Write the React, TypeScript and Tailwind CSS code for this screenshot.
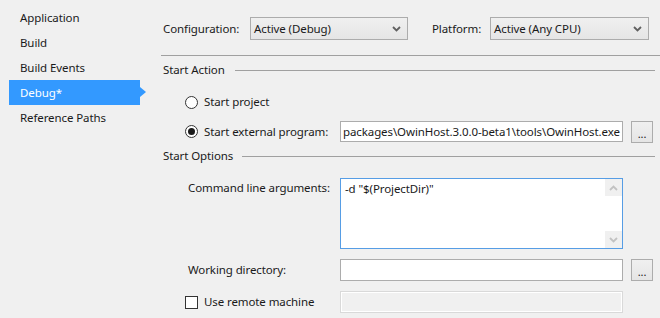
import React from "react";

const navItems = ["Application", "Build", "Build Events", "Debug*", "Reference Paths"];

const Chevron = ({ up = false, className = "" }: { up?: boolean; className?: string }) => (
  <svg width="9" height="6" viewBox="0 0 9 6" className={className}>
    <path
      d={up ? "M1 5 L4.5 1.5 L8 5" : "M1 1 L4.5 4.5 L8 1"}
      fill="none"
      stroke="currentColor"
      strokeWidth="1.8"
    />
  </svg>
);

const Select = ({ value, width }: { value: string; width: string }) => (
  <div
    className={`${width} h-[23px] border border-[#acacac] bg-gradient-to-b from-[#f0f0f0] to-[#e5e5e5] flex items-center justify-between pl-[3px] pr-[6px]`}
  >
    <span>{value}</span>
    <Chevron className="text-[#606060]" />
  </div>
);

const Browse = () => (
  <div className="ml-[8px] w-[22px] h-[22px] border border-[#acacac] bg-gradient-to-b from-[#f0f0f0] to-[#e5e5e5] flex items-end justify-center pb-[3px] text-[11px] leading-none">
    ...
  </div>
);

const SectionHeader = ({ title, labelWidth }: { title: string; labelWidth: string }) => (
  <div className="h-[20px] flex items-center pl-[2px] pr-[5px]">
    <div className={labelWidth}>{title}</div>
    <div className="flex-1 h-px bg-[#a0a0a0]"></div>
  </div>
);

const Radio = ({ checked = false }: { checked?: boolean }) => (
  <div className="w-[13px] h-[13px] rounded-full border border-[#333] bg-white flex items-center justify-center">
    {checked && <div className="w-[7px] h-[7px] rounded-full bg-[#1a1a1a]"></div>}
  </div>
);

export default function App() {
  return (
    <div
      className="w-[660px] h-[318px] bg-[#f0f0f0] flex overflow-hidden text-[11.5px] tracking-[-0.1px] text-[#1a1a1a]"
      style={{ fontFamily: '"Noto Sans", "Open Sans", sans-serif' }}
    >
      {/* Nav */}
      <div className="w-[161px] pt-[5px]">
        {navItems.map((item) => {
          const active = item === "Debug*";
          return (
            <div key={item} className="h-[25px] flex items-center">
              {active ? (
                <div className="relative ml-[9px] w-[131px] h-[25px] bg-[#3399ff] text-white flex items-center pl-[11px]">
                  {item}
                  <div className="absolute right-[-6px] top-[7px] w-0 h-0 border-y-[5px] border-y-transparent border-l-[6px] border-l-[#3399ff]"></div>
                </div>
              ) : (
                <div className="pl-[20px]">{item}</div>
              )}
            </div>
          );
        })}
      </div>

      {/* Main */}
      <div className="flex-1 flex flex-col">
        <div className="mt-[17px] h-[23px] flex items-center">
          <div className="w-[89px] pl-[2px]">Configuration:</div>
          <Select value="Active (Debug)" width="w-[158px]" />
          <div className="ml-[24px] w-[58px]">Platform:</div>
          <Select value="Active (Any CPU)" width="w-[159px]" />
        </div>

        <div className="mt-[15px] h-px bg-[#a0a0a0]"></div>

        <div className="mt-[4px]">
          <SectionHeader title="Start Action" labelWidth="w-[72px]" />
        </div>

        <div className="mt-[12px] h-[20px] flex items-center pl-[24px] gap-[6px]">
          <Radio />
          <span>Start project</span>
        </div>

        <div className="mt-[9px] h-[21px] flex items-center pl-[24px]">
          <div className="w-[155px] flex items-center gap-[6px]">
            <Radio checked />
            <span>Start external program:</span>
          </div>
          <div className="w-[283px] h-[21px] border border-[#acacac] bg-white flex items-center pl-[2px] overflow-hidden whitespace-nowrap">
            packages\OwinHost.3.0.0-beta1\tools\OwinHost.exe
          </div>
          <Browse />
        </div>

        <div className="mt-[4px]">
          <SectionHeader title="Start Options" labelWidth="w-[79px]" />
        </div>

        <div className="mt-[12px] flex pl-[27px]">
          <div className="w-[152px] pt-[1px]">Command line arguments:</div>
          <div className="w-[283px] h-[71px] border border-[#569de5] bg-white flex">
            <div className="flex-1 pl-[4px] pt-[1px]">-d "$(ProjectDir)"</div>
            <div className="w-[17px] flex flex-col justify-between">
              <div className="h-[17px] bg-[#f0f0f0] flex items-center justify-center">
                <Chevron up className="text-[#c2c2c2]" />
              </div>
              <div className="h-[17px] bg-[#f0f0f0] flex items-center justify-center">
                <Chevron className="text-[#c2c2c2]" />
              </div>
            </div>
          </div>
        </div>

        <div className="mt-[10px] h-[22px] flex items-center pl-[27px]">
          <div className="w-[152px]">Working directory:</div>
          <div className="w-[283px] h-[22px] border border-[#acacac] bg-white"></div>
          <Browse />
        </div>

        <div className="mt-[10px] h-[22px] flex items-center pl-[24px]">
          <div className="w-[155px] flex items-center gap-[6px]">
            <div className="w-[13px] h-[13px] border border-[#333] bg-white"></div>
            <span>Use remote machine</span>
          </div>
          <div className="w-[283px] h-[22px] border border-[#d9d9d9] bg-[#f0f0f0] shadow-[inset_0_0_0_1px_#ffffff]"></div>
        </div>
      </div>
    </div>
  );
}
